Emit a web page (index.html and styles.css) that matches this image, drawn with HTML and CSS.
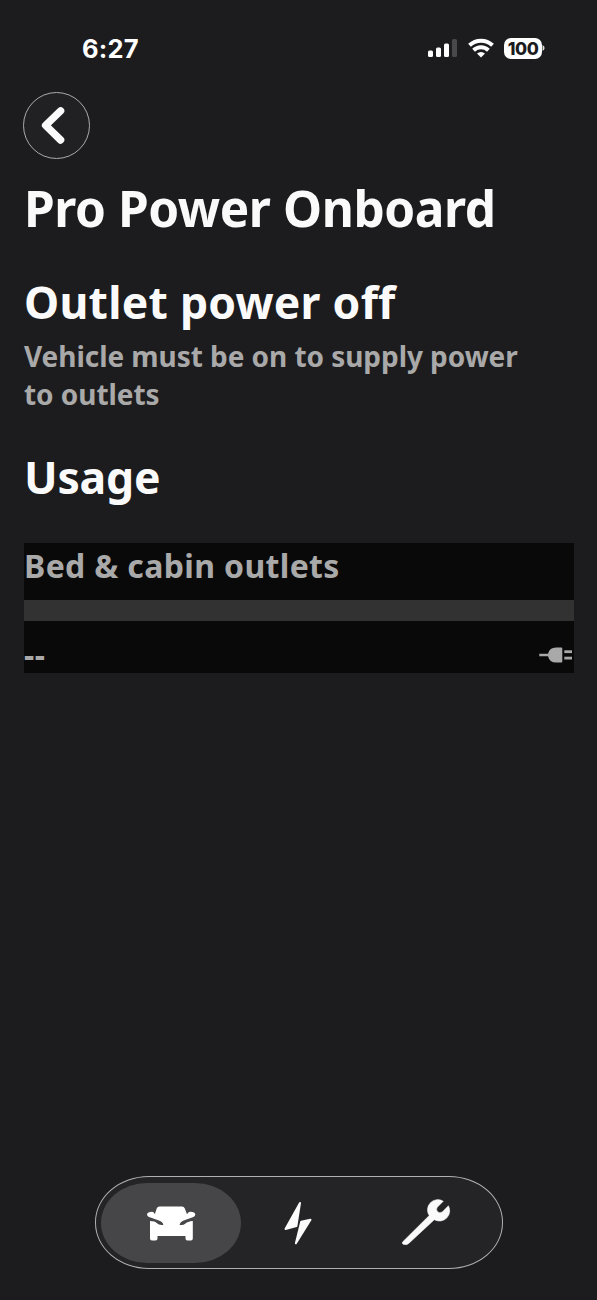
FILE: index.html
```html
<!DOCTYPE html>
<html lang="en">
<head>
<meta charset="utf-8">
<title>Pro Power Onboard</title>
<link rel="stylesheet" href="styles.css">
</head>
<body>
<div class="screen">
  <header class="status">
    <span class="time">6:27</span>
    <div class="indicators">
      <svg class="signal" width="30" height="20" viewBox="0 0 30 20">
        <rect x="0" y="12.5" width="5" height="6.5" rx="1.5" fill="#fff"/>
        <rect x="8" y="9.5" width="5" height="9.5" rx="1.5" fill="#fff"/>
        <rect x="16" y="5.5" width="5" height="13.5" rx="1.5" fill="#fff"/>
        <rect x="24" y="1" width="5" height="18" rx="1.5" fill="#49494b"/>
      </svg>
      <svg class="wifi" width="26" height="20" viewBox="0 0 26 20">
        <g fill="none" stroke="#fff" stroke-width="4">
          <path d="M1.500 7.300a16.600 16.600 0 0 1 23 0"/>
          <path d="M5.600 12.300a10.700 10.700 0 0 1 14.800 0"/>
        </g>
        <path d="M9 15.500a5.900 5.900 0 0 1 8 0L13 19.600Z" fill="#fff"/>
      </svg>
      <div class="battery"><span class="level">100</span></div>
      <svg class="battery-tip" width="3" height="8" viewBox="0 0 3 8"><path d="M.5 1Q2.6 2 2.6 4T.5 7Z" fill="#ddd"/></svg>
    </div>
  </header>
  <button class="back" aria-label="Back">
    <svg width="65" height="65" viewBox="0 0 65 65"><path d="M36.600 17.800 21.600 32.300 36.600 47" fill="none" stroke="#fafafa" stroke-width="7.400" stroke-linecap="round" stroke-linejoin="round"/></svg>
  </button>
  <main>
    <h1 class="title">Pro Power Onboard</h1>
    <h2 class="heading outlet">Outlet power off</h2>
    <p class="note">Vehicle must be on to supply power<br>to outlets</p>
    <h2 class="heading usage">Usage</h2>
    <section class="card">
      <div class="card-title">Bed &amp; cabin outlets</div>
      <div class="meter"></div>
      <div class="reading">
        <span class="value">--</span>
        <svg class="plug" width="34" height="16" viewBox="0 0 34 16" fill="#a9a9a9">
          <path d="M.3 6.800H9Q10.500 .4 17 .4h5.300q1 0 1 1v13.200q0 1-1 1H17Q10.500 15.600 9 9.200H.3Z"/>
          <rect x="25.300" y="3.300" width="7.700" height="2.800"/><rect x="25.300" y="9.700" width="7.700" height="2.800"/>
        </svg>
      </div>
    </section>
  </main>
  <nav class="tabs">
    <div class="tab active">
      <svg class="car" width="50" height="35" viewBox="0 0 50 35" fill="#fff">
        <path d="M13.500.5h22.500q2 0 2.700 1.700l2.300 6Q42 5.500 44.500 5.700 49 6 49.300 8.300 49.300 10.500 46 11.500L37 14.800Q34 16 33.500 19 37.500 19.500 39.500 17.500T46.800 15V32.500Q46.800 34.500 45 34.500H41.500Q39.500 34.500 39.500 32.500V30H11.500V32.500Q11.500 34.500 9.500 34.500H6Q4 34.500 4 32.500V15Q9 15 11 17.300T17.300 19Q17 16 13.500 14.800L4.500 11.500Q1 10.500 1 8.300 1.500 6 6 5.700 8.200 5.500 8.800 8.200L10.800 2.200Q11.500.5 13.500.5Z"/>
      </svg>
    </div>
    <div class="tab charge">
      <svg width="28" height="44" viewBox="0 0 28 44" fill="#fafafa" stroke="#fafafa" stroke-width="2" stroke-linejoin="round">
        <path d="M16 2 1.500 28 12.400 25Z"/><path d="M17.200 20.800 26.500 18.700 11.900 42.300Z"/>
      </svg>
    </div>
    <div class="tab service">
      <svg width="50" height="48" viewBox="0 0 50 48">
        <path d="M42.300 2.200A10.300 10.300 0 0 0 28.200 16.600L1.800 42.700Q.5 44.300 2.200 45.300 5.500 46.500 8 44.200L33.300 20.700A10.300 10.300 0 0 0 47.400 6.700L41.200 13.100Q37.700 14.500 36.200 12.300 35 10.200 36.300 8.200Z" fill="#fafafa" stroke="#fafafa" stroke-width=".5"/>
      </svg>
    </div>
  </nav>
</div>
</body>
</html>
```
FILE: styles.css
```css
* { box-sizing: border-box; }
body { margin: 0; background: #1c1c1e; font-family: "Noto Sans", sans-serif; font-weight: 700; color: #fafafa; }
.screen { width: 597px; height: 1300px; display: flex; flex-direction: column; padding: 0 24px; overflow: hidden; }
.status { height: 92px; display: flex; justify-content: space-between; padding: 38px 28px 0 58px; flex: none; }
.time { font: 700 25.500px/21px Inter, sans-serif; letter-spacing: 0.200px; color: #fff; }
.indicators { display: flex; height: 20px; align-items: center; }
.wifi { margin-left: 10px; }
.battery { width: 38px; height: 21px; border-radius: 7px; background: #fff; color: #1c1c1e; margin-left: 10px; display: flex; align-items: center; justify-content: center; }
.level { font: 800 17.500px/21px Inter, sans-serif; letter-spacing: -0.4px; }
.back { width: 67px; height: 67px; flex: none; margin: 0 0 0 -1px; padding: 0; border: 1px solid #aaa; border-radius: 50%; background: #212123; display: flex; align-items: center; justify-content: center; }
h1, h2, p { margin: 0; font-weight: 700; white-space: nowrap; }
.title { font-size: 49.500px; line-height: 60px; margin-top: 19px; letter-spacing: -0.430px; }
.heading { font-size: 44.500px; line-height: 56px; }
.outlet { margin-top: 36px; letter-spacing: 0.250px; }
.note { margin-top: 7px; font-size: 28px; line-height: 38px; color: #a9a9a9; letter-spacing: -0.050px; }
.usage { margin-top: 36px; letter-spacing: -0.200px; }
.card { margin-top: 38px; width: 550px; height: 130px; background: #090909; color: #a9a9a9; }
.card-title { height: 57px; font-size: 32px; line-height: 45px; white-space: nowrap; letter-spacing: 0.350px; }
.meter { height: 21px; background: #323233; }
.reading { display: flex; justify-content: space-between; height: 52px; align-items: center; padding-top: 16px; }
.value { font-size: 32px; line-height: 36px; letter-spacing: 0.500px; }
.plug { margin-right: 1px; }
.tabs { width: 408px; height: 93px; margin: auto auto 31px 70.500px; border: 1px solid #b0b0b1; border-radius: 54px / 46px; background: #242426; padding: 6px 5px; display: flex; align-items: center; }
.tab { flex: none; height: 80px; display: flex; align-items: center; justify-content: center; }
.active { width: 140px; background: #464648; border-radius: 46px / 40px; }
.car { margin-top: 2px; }
.charge { width: 115px; }
.service { width: 141px; }
```
